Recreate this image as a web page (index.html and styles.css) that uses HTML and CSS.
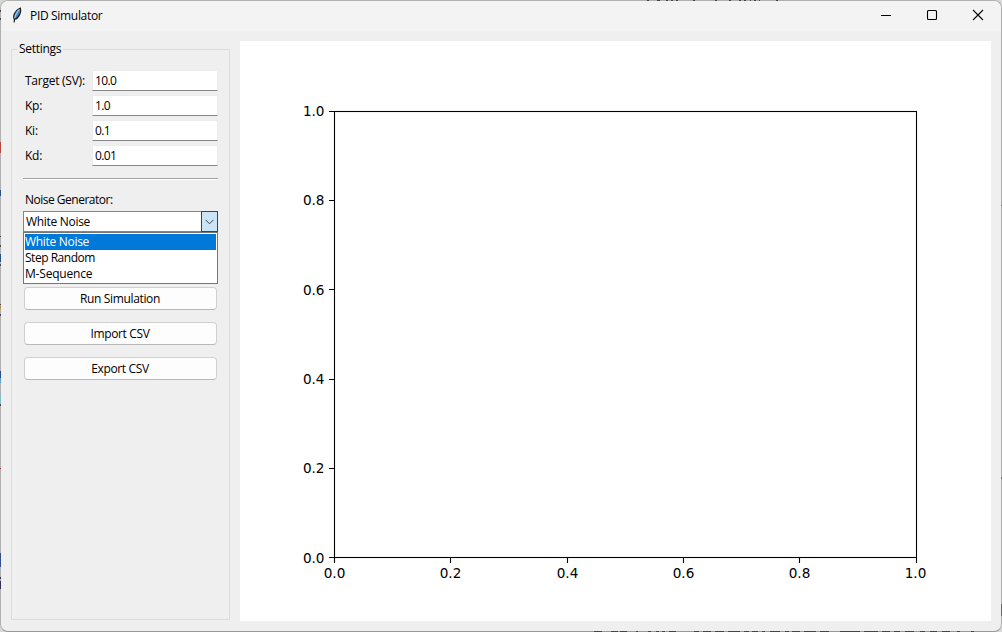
FILE: index.html
```html
<!DOCTYPE html>
<html lang="en">
<head>
    <meta charset="UTF-8">
    <meta name="viewport" content="width=device-width, initial-scale=1.0">
    <title>PID Simulator</title>
    <link rel="stylesheet" href="styles.css">
</head>
<body>
    <div class="window">
        <header class="titlebar">
            <svg class="app-icon" width="16" height="16" viewBox="0 0 16 16">
                <path d="M4.6 15.6 L4.8 12.5 C2.8 9 5.5 3 11.5 .3 C13.3 3 12 9 7.6 12.4 L6.2 12.6 L5.6 15.6Z" fill="#17191d"/>
                <path d="M5.6 10.8 C4.6 7.6 7.4 3.2 10.9 1.8 C11.9 4.5 10 8.8 7 11Z" fill="#3f83c5"/>
                <path d="M5.6 11.4 C6.1 8 8.2 5 10.4 2.4" fill="none" stroke="#a4cdf0" stroke-width="1.1"/>
            </svg>
            <h1>PID Simulator</h1>
            <div class="window-controls">
                <svg width="12" height="12" viewBox="0 0 12 12"><path d="M1 6.5H11"/></svg>
                <svg width="12" height="12" viewBox="0 0 12 12"><rect x="1.5" y="1.5" width="9" height="9" rx="1"/></svg>
                <svg width="12" height="12" viewBox="0 0 12 12"><path d="M1 1L11 11M11 1L1 11"/></svg>
            </div>
        </header>

        <main class="content">
            <section class="settings">
                <h2>Settings</h2>
                <form id="pid-form">
                    <div class="field">
                        <label for="target">Target (SV):</label>
                        <input type="text" id="target" value="10.0">
                    </div>
                    <div class="field">
                        <label for="kp">Kp:</label>
                        <input type="text" id="kp" value="1.0">
                    </div>
                    <div class="field">
                        <label for="ki">Ki:</label>
                        <input type="text" id="ki" value="0.1">
                    </div>
                    <div class="field">
                        <label for="kd">Kd:</label>
                        <input type="text" id="kd" value="0.01">
                    </div>

                    <div class="separator"></div>

                    <div class="noise-label">Noise Generator:</div>
                    <div class="combobox">
                        <span class="combo-value">White Noise</span>
                        <span class="combo-arrow">
                            <svg width="9" height="6" viewBox="0 0 9 6"><path d="M.5 .8L4.5 4.8L8.5 .8"/></svg>
                        </span>
                        <ul class="combo-list">
                            <li class="selected">White Noise</li>
                            <li class="step">Step Random</li>
                            <li class="mseq">M-Sequence</li>
                        </ul>
                    </div>

                    <div class="actions">
                        <button type="button" class="run">Run Simulation</button>
                        <button type="button" class="import">Import CSV</button>
                        <button type="button" class="export">Export CSV</button>
                    </div>
                </form>
            </section>

            <!-- Empty plot -->
            <svg class="plot" width="751" height="580" viewBox="0 0 751 580">
                <g class="axes">
                    <rect x="94.5" y="70.5" width="582" height="446"/>
                    <path d="M94.5 517v5M210.5 517v5M327.5 517v5M443.5 517v5M559.5 517v5M676.5 517v5"/>
                    <path d="M94 70.5h-5M94 159.5h-5M94 248.5h-5M94 338.5h-5M94 427.5h-5M94 516.5h-5"/>
                </g>
                <g class="x-ticks">
                    <text x="94.5" y="537">0.0</text>
                    <text x="210.5" y="537">0.2</text>
                    <text x="327.5" y="537">0.4</text>
                    <text x="443.5" y="537">0.6</text>
                    <text x="559.5" y="537">0.8</text>
                    <text x="675.5" y="537">1.0</text>
                </g>
                <g class="y-ticks">
                    <text x="84.5" y="75">1.0</text>
                    <text x="84.5" y="164">0.8</text>
                    <text x="84.5" y="254">0.6</text>
                    <text x="84.5" y="343">0.4</text>
                    <text x="84.5" y="432">0.2</text>
                    <text x="84.5" y="522">0.0</text>
                </g>
            </svg>
        </main>
    </div>

    <!-- Desktop showing through along the window edges -->
    <svg class="desktop-edges" width="1002" height="632" viewBox="0 0 1002 632">
        <path stroke="#444" d="M647 .5h2M657 .5h3M666 .5h2M671 .5h2M676 .5h2M693 .5h2M715 .5h2M729 .5h2M739 .5h2M744 .5h2M750 .5h1M754 .5h2M759 .5h1M776 .5h2"/>
        <path stroke="#444" d="M594 631.5h8M611 631.5h7M620 631.5h7M636 631.5h2M648 631.5h3M656 631.5h3M662 631.5h3M669 631.5h7M694 631.5h5M703 631.5h8M715 631.5h9M728 631.5h12M744 631.5h5M752 631.5h6M762 631.5h3M770 631.5h10M785 631.5h4M792 631.5h8M804 631.5h12M820 631.5h9M840 631.5h20M864 631.5h14M882 631.5h8M894 631.5h6M905 631.5h9M920 631.5h5M930 631.5h7M942 631.5h8M957 631.5h3M971 631.5h3"/>
        <path stroke="#b04a3e" d="M.5 142v11"/>
        <path stroke="#24508a" d="M.5 190v6M.5 254v8M.5 371v7"/>
        <path stroke="#4a4a4a" d="M.5 10v2M.5 18v2M.5 236v1M.5 245v2M.5 264v2M.5 304v1M.5 314v2M.5 404v2"/>
        <path stroke="#b88648" d="M.5 306v3"/>
        <path stroke="#62a0c6" d="M.5 378v5"/>
        <path stroke="#84bcc8" d="M.5 393v11"/>
        <path stroke="#a04040" d="M.5 468v1"/>
        <path stroke="#34508c" d="M.5 553v14"/>
        <path stroke="#333060" d="M.5 577v2M.5 581v8"/>
        <path stroke="#666" d="M1001.5 205v1M1001.5 477v2M1001.5 604v12"/>
    </svg>
</body>
</html>
```
FILE: styles.css
```css
* {
    box-sizing: border-box;
}

body {
    position: relative;
    margin: 0;
    width: 1002px;
    height: 632px;
    overflow: hidden;
    background-color: #d8d8d8;
    font-family: "Open Sans", "Noto Sans", sans-serif;
    font-size: 12px;
    color: #000;
}

.window {
    width: 1002px;
    height: 632px;
    display: flex;
    flex-direction: column;
    border: 1px solid #b0b0b0;
    border-bottom-color: #999;
    border-radius: 8px;
    background-color: #efefef;
    overflow: hidden;
}

.desktop-edges {
    position: absolute;
    top: 0;
    left: 0;
    pointer-events: none;
}

/* Title bar */
.titlebar {
    display: flex;
    align-items: center;
    height: 30px;
    padding: 0 17px 2px 8px;
    background-color: #f3f3f3;
}

.titlebar h1 {
    margin: 0 0 0 5px;
    font-size: 12px;
    font-weight: normal;
    letter-spacing: -0.32px;
}

.window-controls {
    display: flex;
    gap: 34px;
    margin-left: auto;
}

.window-controls svg {
    fill: none;
    stroke: #000;
    stroke-width: 1.1;
}

.content {
    flex: 1;
    display: flex;
    gap: 10px;
    padding: 10px;
}

/* Settings panel */
.settings {
    width: 219px;
    height: 571px;
    margin-top: 8px;
    border: 1px solid #dcdcdc;
}

.settings h2 {
    width: max-content;
    height: 16px;
    margin: -9px 0 0 5px;
    padding: 0 2px;
    background-color: #efefef;
    font-size: 12px;
    font-weight: normal;
    line-height: 16px;
    letter-spacing: -0.3px;
}

#pid-form {
    padding: 13px 11px 0;
}

.field {
    display: flex;
    align-items: center;
    height: 21px;
    margin-bottom: 4px;
    padding-left: 2px;
    letter-spacing: -0.25px;
}

.field label {
    width: 67px;
}

.field input {
    width: 126px;
    height: 21px;
    padding: 0 2px 0 2px;
    border: 1px solid #ececec;
    border-bottom-color: #868686;
    background-color: #fff;
    color: #000;
    font: inherit;
    letter-spacing: -0.6px;
}

.separator {
    height: 2px;
    margin: 12px 0 11px;
    width: 195px;
    border-top: 1px solid #a0a0a0;
    border-bottom: 1px solid #fff;
}

.noise-label {
    height: 20px;
    padding-left: 2px;
    line-height: 18px;
    letter-spacing: -0.5px;
}

.combobox {
    position: relative;
    display: flex;
    width: 195px;
    height: 21px;
    border: 1px solid #868686;
    background-color: #fff;
    line-height: 19px;
    letter-spacing: -0.3px;
}

.combo-value {
    flex: 1;
    padding-left: 2px;
}

.combo-arrow {
    display: flex;
    align-items: center;
    justify-content: center;
    width: 17px;
    margin: -1px;
    border: 1px solid #005499;
    background-color: #cce4f7;
}

.combo-arrow svg {
    fill: none;
    stroke: #444;
}

/* Open list, drawn over the rest of the form */
.combo-list {
    position: absolute;
    top: 20px;
    left: -1px;
    width: 195px;
    height: 52px;
    margin: 0;
    padding: 1px;
    border: 1px solid #767676;
    background-color: #fff;
    list-style-type: none;
}

.combo-list li {
    height: 16px;
    line-height: 16px;
}

.combo-list li.selected {
    background-color: #0078d7;
    color: #fff;
}

.combo-list li.step {
    letter-spacing: -0.48px;
}

.combo-list li.mseq {
    letter-spacing: -0.2px;
}

.actions {
    display: flex;
    flex-direction: column;
    gap: 12px;
    margin-top: 55px;
    padding-left: 1px;
}

.actions button {
    width: 193px;
    height: 23px;
    padding: 0 1px 0 0;
    border: 1px solid #d0d0d0;
    border-bottom-color: #b8b8b8;
    border-radius: 4px;
    background-color: #fdfdfd;
    color: #000;
    font: inherit;
    letter-spacing: -0.35px;
}

/* Plot */
.plot {
    background-color: #fff;
    font-family: "DejaVu Sans", sans-serif;
    font-size: 13.6px;
}

.axes {
    fill: none;
    stroke: #000;
    stroke-width: 1.1;
}

.x-ticks {
    text-anchor: middle;
}

.y-ticks {
    text-anchor: end;
}
```
